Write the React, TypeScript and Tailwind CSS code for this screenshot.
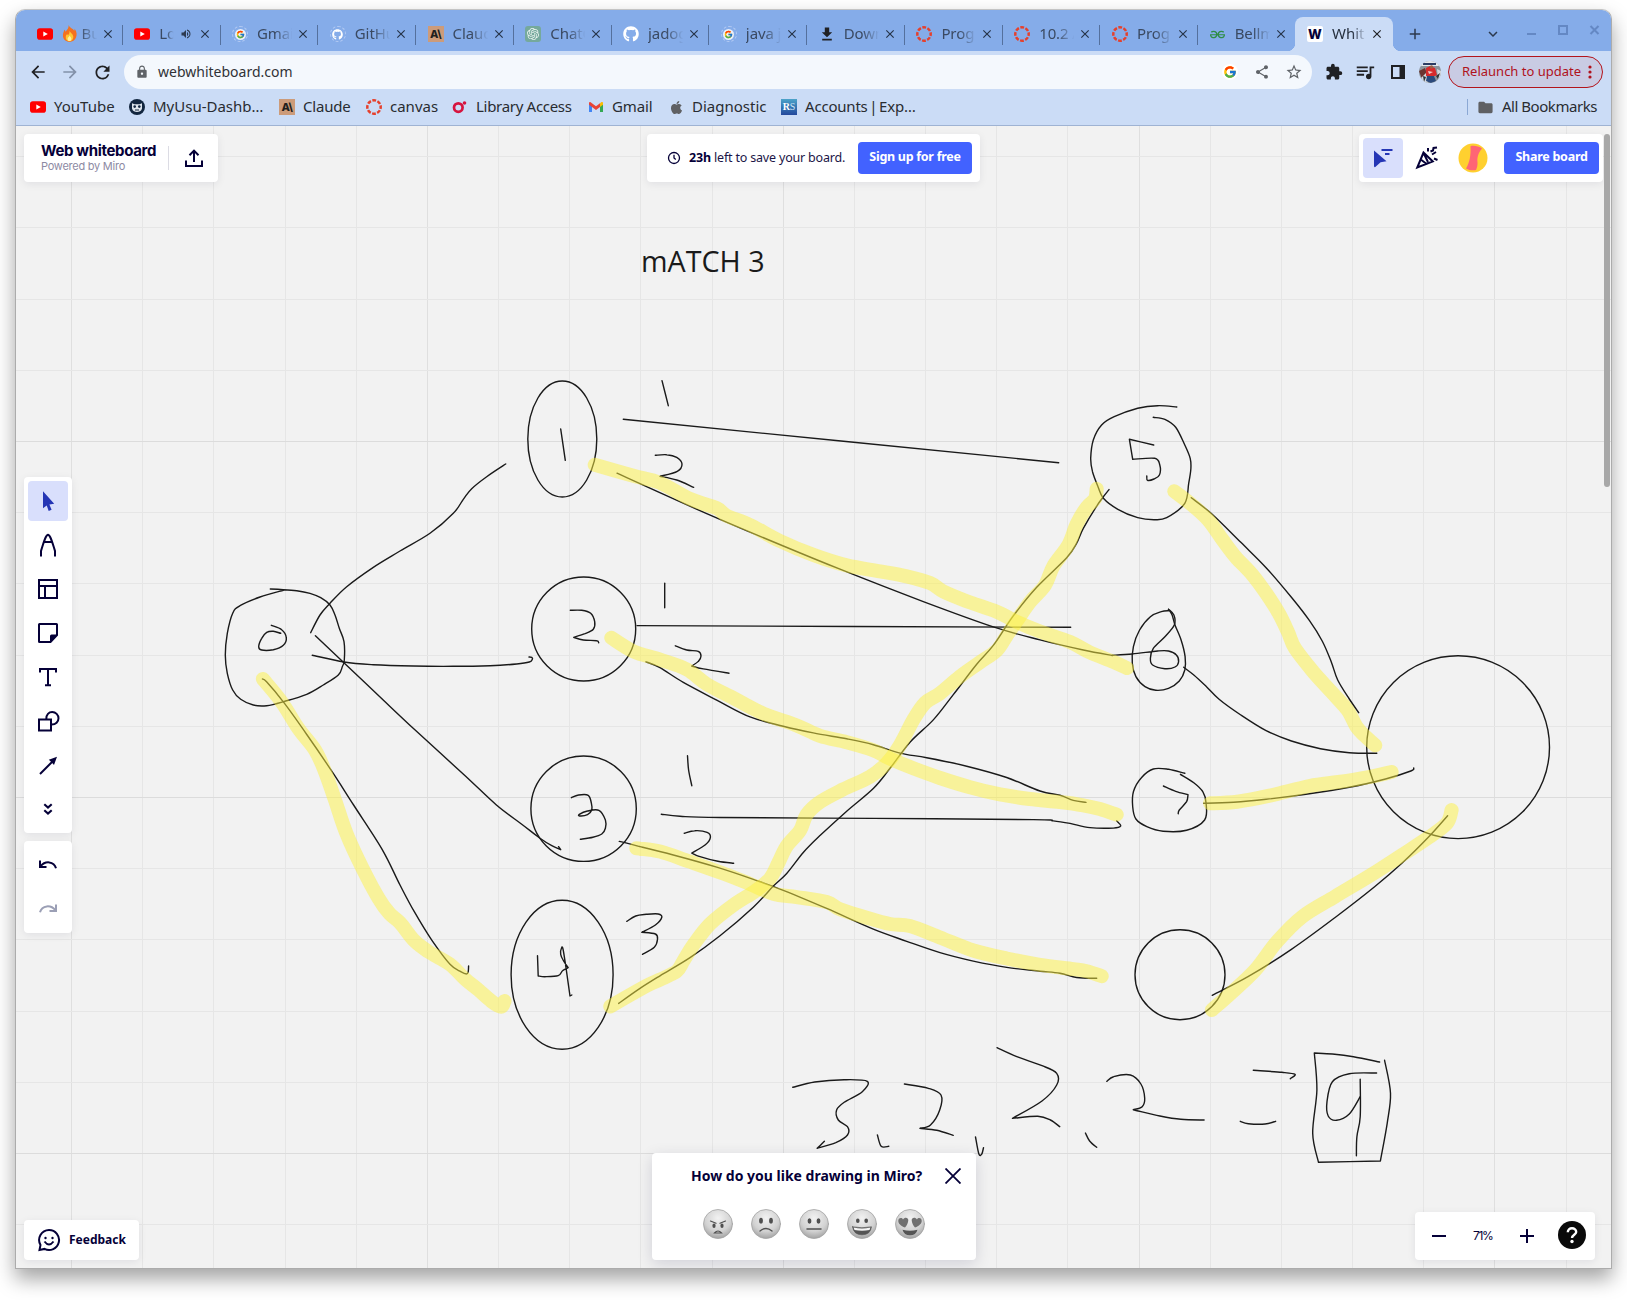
import React from "react";
import { FaGithub, FaApple } from "react-icons/fa";
import { FcGoogle } from "react-icons/fc";
import {
  MdArrowBack, MdArrowForward, MdRefresh, MdLock, MdShare, MdStarBorder, MdExtension,
  MdQueueMusic, MdFolder, MdFileDownload, MdVolumeUp, MdClose, MdAdd, MdKeyboardArrowDown,
} from "react-icons/md";
import { SiGeeksforgeeks, SiOpenai } from "react-icons/si";

/* ---------- brand marks ---------- */

const YouTube = () => (
  <svg viewBox="0 0 16 16" className="size-4">
    <rect y="2.3" width="16" height="11.4" rx="2.8" fill="#f00" />
    <path d="M6.3 5.4v5.2L10.8 8z" fill="#fff" />
  </svg>
);
const Claude = () => (
  <span className="flex size-4 items-center justify-center bg-[#cc9b7a] font-['Inter'] text-[11px] leading-none font-extrabold tracking-[-0.5px] text-[#1f1f1e]">A\</span>
);
const Canvas = () => (
  <svg viewBox="0 0 16 16" className="size-4">
    <circle cx="8" cy="8" r="6.7" fill="none" stroke="#e5402c" strokeWidth="2.500" strokeDasharray="3.800 1.462" strokeDashoffset="1.900" />
  </svg>
);
const Ring = ({ children }: { children: React.ReactNode }) => (
  <span className="flex size-4 items-center justify-center rounded-full border border-dashed border-[#b4cbf3]">{children}</span>
);
const GoogleTab = () => (
  <Ring><span className="flex size-[11px] items-center justify-center rounded-full bg-[#e9effb]"><FcGoogle size={9} /></span></Ring>
);
const GithubTab = () => <Ring><FaGithub size={11} color="#fff" /></Ring>;
const Github = () => <FaGithub size={16} color="#fff" />;
const ChatGpt = () => (
  <span className="flex size-4 items-center justify-center rounded-[3px] bg-[#75a99c]"><SiOpenai size={12} color="#eef6f3" /></span>
);
const Download = () => (
  <svg viewBox="0 0 16 16" className="size-4" fill="#202124">
    <path d="M5.800 1.500h4.400v4.700h3L8 11.200 2.800 6.200h3zM3.200 12.700h9.600v1.800H3.200z" />
  </svg>
);
const Geeks = () => <SiGeeksforgeeks size={15} color="#2f8d46" />;
const White = () => (
  <span className="flex size-4 items-center justify-center rounded-[2px] bg-white font-['Inter'] text-[13px] leading-none font-extrabold text-[#050038]">W</span>
);
const Owl = () => (
  <svg viewBox="0 0 16 16" className="size-4">
    <circle cx="8" cy="8" r="8" fill="#12263f" />
    <path d="M3 4.2 5.5 5.2h5L13 4.2v5.2C12.4 12 10 12.9 8 12.9S3.600 12 3 9.400z" fill="#dfe6ee" />
    <circle cx="5.700" cy="7.600" r="1.300" fill="#12263f" />
    <circle cx="10.300" cy="7.600" r="1.300" fill="#12263f" />
    <path d="M6 11h4" stroke="#12263f" />
  </svg>
);
const Library = () => (
  <svg viewBox="0 0 16 16" className="size-4">
    <circle cx="6.300" cy="8.600" r="4.300" fill="none" stroke="#d6143f" strokeWidth="2.700" />
    <circle cx="12.500" cy="4" r="1.800" fill="#d6143f" />
  </svg>
);
const Gmail = () => (
  <svg viewBox="0 0 16 16" className="size-4">
    <path d="M1 4v9h3V7z" fill="#4285f4" />
    <path d="M15 4v9h-3V7z" fill="#34a853" />
    <path d="M12 4.500V8l3-2.300V4c0-1.300-1.500-1.700-3 .5z" fill="#fbbc04" />
    <path d="M1 4v1.700L8 11l4-3V4.300L8 7.300 3.600 4C2.400 2.500 1 2.800 1 4z" fill="#ea4335" />
  </svg>
);
const Rs = () => (
  <span className="flex size-4 items-center justify-center bg-linear-to-b from-[#4da3c9] to-[#24489c] font-['Liberation_Serif'] text-[10px] leading-none font-bold text-white">R<span className="font-normal text-[#cfe6f5]">S</span></span>
);
const Fire = () => (
  <svg viewBox="0 0 16 18" className="h-[17px] w-[15px] shrink-0">
    <path d="M7 0c1 3 5 4 6 6 .5-.6.500-1.500.400-2.200C16 7 16 10 15 13c-1 3-4 5-7 5s-6.500-2-7-6C.700 9 2 7 2.500 5c.700.500 1 1.200 1.200 2C5.500 5 7.500 3 7 0z" fill="#f4711f" />
    <path d="M8 6c.5 2 3.500 3 4 6 .3 3-1.500 5.300-4 5.300S3.700 15.500 4 12.500c.2-1.500 1-2.500 1.500-3 .2.700.600 1.100 1 1.300C7.500 9.500 8.300 8 8 6z" fill="#fdc834" />
    <path d="M8 11c.5 1 2 2 2 3.500S9.200 17 8 17s-2.200-1-2-2.500S7.500 12.500 8 11z" fill="#fff0a0" />
  </svg>
);

/* ---------- browser chrome ---------- */

type Tab = { icon: () => React.ReactElement; title: string; fire?: boolean; audio?: boolean };
const tabs: Tab[] = [
  { icon: YouTube, title: "Bu", fire: true },
  { icon: YouTube, title: "Lo", audio: true },
  { icon: GoogleTab, title: "Gmai" },
  { icon: GithubTab, title: "GitHu" },
  { icon: Claude, title: "Claud" },
  { icon: ChatGpt, title: "ChatG" },
  { icon: Github, title: "jadog" },
  { icon: GoogleTab, title: "java j" },
  { icon: Download, title: "Down" },
  { icon: Canvas, title: "Prog" },
  { icon: Canvas, title: "10.2 A" },
  { icon: Canvas, title: "Prog" },
  { icon: Geeks, title: "Bellm" },
];

const TabItem = ({ icon: Icon, title, fire, audio, last }: Tab & { last: boolean }) => (
  <div className="relative flex h-full w-[97.770px] shrink-0 items-center pt-[7px] pl-[11.500px] text-[#3a4961]">
    <span className="flex size-4 shrink-0 items-center justify-center"><Icon /></span>
    <span className={`ml-[9px] flex h-[22px] items-center overflow-hidden pb-px text-[15px] tracking-[-0.100px] whitespace-nowrap [mask-image:linear-gradient(to_right,black_50%,transparent_98%)] ${audio ? "w-[15px]" : "w-[36px]"}`}>
      {fire ? <><Fire /><span className="ml-[5px]">{title}</span></> : title}
    </span>
    {audio && <MdVolumeUp size={12} className="ml-[6px]" color="#2d3a50" />}
    <MdClose size={14} color="#263449" className="absolute top-[17px] left-[75.500px]" />
    {!last && <span className="absolute top-[15px] right-0 h-5 w-px bg-[#54709d]" />}
  </div>
);

const TabStrip = () => (
  <div className="flex h-[41px] bg-[#85ace9] pl-[9px]">
    {tabs.map((t, i) => <TabItem key={i} {...t} last={i === tabs.length - 1} />)}
    <div className="relative mt-[7px] -ml-px flex h-[34px] w-[98px] shrink-0 items-center rounded-t-lg bg-[#cbdcf6] pl-3 text-[15px] text-[#26303f]">
      <White />
      <span className="-mt-[2px] ml-[9px] w-[34px] overflow-hidden whitespace-nowrap [mask-image:linear-gradient(to_right,black_60%,transparent)]">Whit</span>
      <MdClose size={14} color="#202124" className="absolute top-[10px] left-[75px]" />
      <span className="absolute bottom-0 -left-2 size-2 bg-[radial-gradient(circle_at_0_0,transparent_8px,#cbdcf6_8.500px)]" />
      <span className="absolute -right-2 bottom-0 size-2 bg-[radial-gradient(circle_at_100%_0,transparent_8px,#cbdcf6_8.500px)]" />
    </div>
    <MdAdd size={18} color="#2c394d" className="mt-[15px] ml-[13px]" />
    <MdKeyboardArrowDown size={18} color="#2c394d" className="mt-[15px] ml-[60px]" />
    <svg viewBox="0 0 80 20" className="mt-[10px] ml-5 h-5 w-20" fill="none" stroke="#6488c4" strokeWidth="2">
      <path d="M5 14h9" />
      <rect x="37" y="6" width="8" height="8" />
      <path d="M68.500 6l8 8M76.500 6l-8 8" />
    </svg>
  </div>
);

const AddressBar = () => (
  <div className="flex h-[42px] items-center bg-[#cbdcf6]">
    <MdArrowBack size={20} color="#202124" className="ml-3" />
    <MdArrowForward size={20} color="#8391a9" className="ml-3" />
    <MdRefresh size={21} color="#202124" className="ml-3" />
    <div className="ml-[11px] flex h-[34px] w-[1188px] items-center rounded-full bg-[#f4f8fd] pl-[11px]">
      <MdLock size={14} color="#5f6368" />
      <span className="-mt-[2px] ml-[9px] text-[14px] text-[#303236]">webwhiteboard.com</span>
      <span className="flex-1" />
      <span className="flex size-4 items-center justify-center rounded-full bg-white"><FcGoogle size={14} /></span>
      <MdShare size={16} color="#5f6368" className="ml-4" />
      <MdStarBorder size={18} color="#5f6368" className="mr-[9px] ml-[15px]" />
    </div>
    <MdExtension size={18} color="#202124" className="ml-[13px]" />
    <MdQueueMusic size={22} color="#202124" className="ml-[11px]" />
    <svg viewBox="0 0 14 14" className="ml-[15px] size-[14px]">
      <path d="M0 0h14v14H0zM2 2v10h6.500V2z" fill="#202124" fillRule="evenodd" />
    </svg>
    <svg viewBox="0 0 22 22" className="ml-[14px] size-[22px] overflow-hidden rounded-full">
      <rect width="22" height="22" fill="#8b949c" />
      <path d="M0 0h22v5H0z" fill="#e4e8ed" />
      <path d="M4 2h13v2H4z" fill="#2b3c64" />
      <path d="M0 10l6-3 2 6-5 5z" fill="#6c3430" />
      <path d="M2 17l5-5 2 10H5zM18 8l4 2v6l-3 2z" fill="#d3d8de" />
      <path d="M7 7l4-2 5 2 2 7-2 1H7z" fill="#d62a2c" />
      <path d="M8 15h7l2 5-5 2-5-2z" fill="#2b4a7c" />
      <circle cx="12.500" cy="6" r="1.700" fill="#9c6048" />
      <path d="M9 10l5 1-4 2z" fill="#f1c9c4" />
      <path d="M4 15l3 1-2 5zM17 15l4-3-2 6z" fill="#303439" />
    </svg>
    <div className="ml-[7px] flex h-8 w-[155px] items-center rounded-full border border-[#b3141b] bg-[#c9cbe3] pl-[13px] text-[13px] whitespace-nowrap text-[#b0121c]">
      <span className="w-[111px]">Relaunch to update</span>
      <svg viewBox="0 0 4 14" className="ml-[15px] h-[14px] w-1" fill="#b0121c">
        <circle cx="2" cy="2" r="1.600" /><circle cx="2" cy="7" r="1.600" /><circle cx="2" cy="12" r="1.600" />
      </svg>
    </div>
  </div>
);

const bookmarks = [
  { icon: <YouTube />, label: "YouTube", w: "w-[99px]" },
  { icon: <Owl />, label: "MyUsu-Dashb…", w: "w-[150px]" },
  { icon: <Claude />, label: "Claude", w: "w-[87px] tracking-[-0.2px]" },
  { icon: <Canvas />, label: "canvas", w: "w-[86px]" },
  { icon: <Library />, label: "Library Access", w: "w-[136px] tracking-[-0.3px]" },
  { icon: <Gmail />, label: "Gmail", w: "w-[80px] tracking-[-0.1px]" },
  { icon: <FaApple size={15} color="#5f6063" />, label: "Diagnostic", w: "w-[113px]" },
  { icon: <Rs />, label: "Accounts | Exp…", w: "w-[150px] [word-spacing:-2px] tracking-[-0.2px]" },
];

const BookmarksBar = () => (
  <div className="flex h-[33px] items-center border-b border-[#9fb3d3] bg-[#cbdcf6] pb-[4px] pl-[14px] text-[15px] text-[#292c31]">
    {bookmarks.map((b) => (
      <div key={b.label} className={`flex shrink-0 items-center gap-2 whitespace-nowrap ${b.w}`}>
        <span className="flex size-4 shrink-0 items-center justify-center">{b.icon}</span>
        <span className="-mt-[2px]">{b.label}</span>
      </div>
    ))}
    <span className="flex-1" />
    <span className="h-4 w-px bg-[#8ba8d4]" />
    <MdFolder size={17} color="#5f6063" className="ml-[9px]" />
    <span className="-mt-[2px] mr-[14px] ml-2 tracking-[-0.450px] whitespace-nowrap">All Bookmarks</span>
  </div>
);

/* ---------- whiteboard drawing ---------- */

type Sheet = { x: number; y: number; sx: number; sy: number };
const A: Sheet = { x: 200, y: 360, sx: 3, sy: 3 };
const B: Sheet = { x: 200, y: 700, sx: 2.8, sy: 3 };
const C: Sheet = { x: 640, y: 360, sx: 3, sy: 2.3758 };
const D: Sheet = { x: 1060, y: 380, sx: 2.7654, sy: 3 };
const E: Sheet = { x: 1060, y: 700, sx: 2.7654, sy: 3 };
const F: Sheet = { x: 760, y: 1030, sx: 2.3758, sy: 3 };

/* Smooth curve through the points; "|" starts a new segment at a sharp corner. */
function curve(s: Sheet, data: string): string {
  let out = "";
  let corner: number[] | null = null;
  for (const part of data.split("|")) {
    const p = part.trim().split(/\s+/).map((q) => {
      const [x, y] = q.split(",").map(Number);
      return [s.x + x / s.sx, s.y + y / s.sy];
    });
    if (corner) p.unshift(corner);
    else out += `M${p[0][0].toFixed(1)} ${p[0][1].toFixed(1)}`;
    for (let i = 0; i < p.length - 1; i++) {
      const a = p[Math.max(i - 1, 0)], b = p[i], c = p[i + 1], d = p[Math.min(i + 2, p.length - 1)];
      const n = [b[0] + (c[0] - a[0]) / 6, b[1] + (c[1] - a[1]) / 6, c[0] - (d[0] - b[0]) / 6, c[1] - (d[1] - b[1]) / 6, c[0], c[1]];
      out += "C" + n.map((v) => v.toFixed(1)).join(" ");
    }
    corner = p[p.length - 1];
  }
  return out;
}

const pen: [Sheet, string][] = [
  [A, "211,687 250,689 290,692 330,700 362,713 390,735 405,765 418,805 432,845 433,900 427,920 415,945 370,975 320,1003 250,1025 200,1037 160,1035 122,1018 98,990 82,940 76,885 82,820 98,760 120,737 180,711 250,691"],
  [A, "214,796 245,809 259,833 250,856 220,869 185,870 176,860 185,835 200,817 220,814 242,820"],
  [A, "332,818 360,765 390,730 440,680 520,622 600,573 690,520 760,460 790,418 815,386 860,350 917,312"],
  [A, "337,886 432,906 520,914 640,918 760,919 870,917 950,912 988,906 997,898 995,892 987,891"],
  [B, "323,-193 403,-112 513,0 600,88 740,225 830,315 900,372 950,413 985,437 1010,449 | 1004,440"],
  [B, "175,-63 187,-54 235,8 300,105 370,215 430,315 510,448 560,555 600,635 650,722 700,793 730,815 746,822 751,815 752,798"],
  [A, "1082,207 1096,301"],
  [A, "1386,62 1405,137"],
  [A, "1366,286 1400,284 1430,292 1446,312 1432,334 1380,349 | 1430,360 1481,382"],
  [A, "1111,751 1145,751 1172,760 1184,785 1180,808 1155,821 1121,832 | 1150,840 1190,842 1196,848"],
  [A, "1394,670 1394,743"],
  [B, "1040,293 1060,285 1087,286 1096,310 1097,330 1085,344 1063,348 1062,343 1085,333 1117,331 1135,360 1135,385 1125,402 1100,412 1065,418"],
  [B, "945,767 947,828 | 965,830 1003,827 1015,812 1031,803 | 1018,783 1010,763 1013,742 1017,750 1025,805 1036,888 | 1041,885"],
  [B, "1195,664 1220,648 1250,643 1283,642 1293,652 1275,675 1237,697 | 1275,702 1281,718 1272,742 1239,763"],
  [B, "1365,167 1368,210 1377,257"],
  [B, "1356,400 1385,392 1420,397 1429,412 1415,434 1377,459 | 1400,470 1450,484 1494,490"],
  [C, "-50,141 1256,244"],
  [C, "-69,269 0,294 200,365 430,442 600,497 850,574 1060,634 1200,665 1330,689 1417,702"],
  [C, "-9,631 1292,635"],
  [C, "106,679 140,689 175,692 183,703 175,716 155,727 | 190,734 267,744"],
  [C, "18,717 60,731 130,766 230,808 330,848 430,870 520,886 620,900 700,914 780,934 860,945 980,965 1100,992 1200,1024 1260,1034 1300,1046 1338,1051"],
  [C, "64,1079 120,1084 240,1087 700,1089 1180,1092 1240,1095 1290,1101 1350,1111 1420,1112 1442,1107 1430,1095"],
  [C, "-62,1143.6 0,1156 100,1176 230,1205 340,1234 430,1260 560,1303 700,1352 800,1381 900,1408 1000,1428 1100,1443 1200,1452 1260,1457 1310,1467 1370,1469"],
  [C, "-64,1528.5 0,1493 60,1463 150,1420 240,1368 340,1300 400,1250 440,1220 490,1170 540,1130 620,1072 700,1018 750,970 810,908 880,855 940,795 1010,723 1060,678 1120,608 1190,540 1280,470 1310,435 1330,400 1370,347 1390,325 1407,308"],
  [D, "323,81 270,77 215,85 150,110 115,135 92,180 85,235 90,275 105,320 120,355 160,388 215,413 260,419 295,413 345,370 356,310 362,265 360,235 345,195 320,142 290,118 258,112"],
  [D, "259,195 192,178 | 201,238 | 262,235 276,255 275,285 260,297 242,301 240,288"],
  [D, "363,353 420,402 500,487 570,563 640,652 690,722 725,783 750,845 768,900 800,957 826,998"],
  [D, "300,688 315,705 316,735 290,770 258,805 250,835 256,855 290,866 318,861 328,845 322,825 300,813 270,813 200,822 145,826"],
  [D, "300,688 310,705 318,735 335,780 346,830 345,870 330,903 300,925 265,931 235,920 210,890 200,850 203,800 220,750 250,710 280,695 300,692"],
  [D, "342,862 370,885 405,920 440,958 500,1005 570,1052 640,1083 720,1106 800,1118 876,1120"],
  [E, "345,220 300,208 258,207 225,233 203,275 201,320 210,357 240,380 285,394 350,391 400,360 404,310 395,275 370,248 333,223"],
  [E, "286,258 320,274 354,284 | 350,305 330,330 327,341"],
  [E, "397,310 480,307 570,298 680,283 800,262 900,237 970,213 978,204"],
  [E, "421,886 520,830 640,748 760,653 870,560 950,485 1020,410 1072,347"],
  [F, "78,172 130,156 200,149 255,154 243,185 200,217 182,240 186,270 208,290 208,315 180,338 136,355 | 153,334"],
  [F, "279,315 288,349 306,349"],
  [F, "343,162 400,175 430,195 427,240 405,285 380,295 | 420,301 459,316"],
  [F, "512,321 520,372 527,372 531,353"],
  [F, "563,53 610,80 670,107 705,130 705,165 670,213 600,265 | 660,259 690,270 712,290"],
  [F, "773,309 783,333 800,352"],
  [F, "824,154 840,140 880,135 905,162 914,205 908,230 887,239 | 950,258 1000,268 1055,270"],
  [F, "1172,121 1240,127 1271,133 1260,146"],
  [F, "1141,274 1160,281 1200,282 1225,274"],
  [F, "1472,96 1410,80 1360,72 1317,69 | 1323,180 1313,310 1327,397 | 1474,393 | 1490,280 1498,190 1484,91"],
  [F, "1465,129 1400,131 1360,155 1347,215 1350,258 1370,271 1400,252 1426,200"],
  [F, "1426,148 1426,260 1418,320 1417,377"],
];

const highlighter: [Sheet, string][] = [
  [B, "176,-63 228,5 275,85 322,150 350,215 378,300 410,400 455,505 500,595 530,640 560,668 600,722 640,755 700,793 740,835 780,870 815,903 843,920 853,903"],
  [C, "-136,249 -20,275 60,292 150,330 230,352 260,370 330,392 420,430 520,463 620,488 720,502 800,514 870,530 910,550 980,573 1070,598 1130,622 1200,645 1290,670 1350,695 1420,717 1461,732"],
  [C, "-86,660 -20,692 60,712 140,735 200,770 280,803 370,840 470,868 540,893 620,908 700,927 750,947 820,970 900,993 990,1015 1080,1032 1170,1043 1260,1050 1330,1058 1380,1067 1430,1080"],
  [C, "-11,1160 0,1161 60,1168 150,1192 250,1220 330,1245 400,1268 470,1276 560,1288 600,1305 680,1325 750,1340 810,1345 900,1372 1000,1403 1100,1422 1200,1437 1300,1447 1340,1452 1385,1464"],
  [C, "-89,1535.6 19,1487 60,1472 110,1452 130,1428 160,1390 210,1340 280,1295 345,1262 390,1232 415,1195 440,1155 480,1118 500,1080 540,1050 610,1020 690,990 740,958 780,915 820,855 855,815 900,792 960,752 1020,718 1070,690 1100,655 1130,620 1170,575 1215,535 1240,490 1285,440 1310,390 1340,350 1365,330 1370,306"],
  [D, "316,334 365,375 410,420 450,480 485,530 530,582 570,640 605,700 630,755 650,805 700,875 750,935 795,990 820,1040 850,1075 872,1096"],
  [E, "415,310 490,305 580,287 690,258 770,246 850,232 917,216"],
  [E, "420,930 470,882 540,810 600,725 670,650 760,590 860,525 950,462 1020,412 1070,370 1083,330"],
];

const gridX = Array.from({ length: 22 }, (_, i) => i);
const gridY = Array.from({ length: 16 }, (_, i) => i);

const Board = () => (
  <svg viewBox="16 126 1595 1142" className="absolute inset-0 h-full w-full" fill="none">
    {gridX.map((i) => (
      <rect key={i} x={Math.round(71 + i * 71.170)} y="126" width="1" height="1142" fill={i % 5 === 0 ? "#dfdfdf" : "#e6e6e6"} />
    ))}
    {gridY.map((i) => (
      <rect key={i} x="16" y={Math.round(156.200 + i * 71.200)} width="1595" height="1" fill={i % 5 === 4 ? "#dcdcdc" : "#e6e6e6"} />
    ))}
    <g stroke="#1a1a1a" strokeWidth="1.400" strokeLinecap="round" strokeLinejoin="round">
      {pen.map(([s, d], i) => <path key={i} d={curve(s, d)} />)}
      <ellipse cx="562.300" cy="439" rx="34.500" ry="58" />
      <circle cx="583.700" cy="629" r="52" />
      <circle cx="583.600" cy="808.700" r="52.700" />
      <ellipse cx="562.100" cy="974.700" rx="51" ry="74.500" />
      <circle cx="1458.100" cy="747.200" r="91.400" />
      <circle cx="1180" cy="974.700" r="45" />
    </g>
    <g stroke="rgb(254 242 66 / .5)" strokeWidth="14" strokeLinecap="round" strokeLinejoin="round">
      {highlighter.map(([s, d], i) => <path key={i} d={curve(s, d)} />)}
    </g>
  </svg>
);

/* ---------- floating panels ---------- */

const panel = "absolute rounded-[4px] bg-white shadow-[0_2px_8px_rgba(5,0,56,0.08)]";

const TitlePanel = () => (
  <div className={`${panel} top-2 left-2 flex h-12 w-[194px] items-center pl-[17px]`}>
    <div className="w-[127px] font-['Inter'] whitespace-nowrap">
      <div className="text-[15px] leading-[17px] font-bold tracking-[-0.350px] text-[#050038]">Web whiteboard</div>
      <div className="text-[11px] leading-[15px] tracking-[-0.250px] text-[#8d8aa3]">Powered by Miro</div>
    </div>
    <span className="h-6 w-px bg-[#dcdce4]" />
    <svg viewBox="0 0 18 18" className="ml-4 size-[18px]" fill="none" stroke="#050038" strokeWidth="2">
      <path d="M1 11.500V17h16v-5.500M9 13V2M4.500 6.200 9 1.600l4.500 4.600" />
    </svg>
  </div>
);

const SavePanel = () => (
  <div className={`${panel} top-2 left-[631px] flex h-12 w-[333px] items-center pl-5 whitespace-nowrap`}>
    <svg viewBox="0 0 14 14" className="size-[14px]" fill="none" stroke="#050038" strokeWidth="1.300">
      <circle cx="7" cy="7" r="5.500" /><path d="M7 3.800V7l1.800 1.600" />
    </svg>
    <span className="ml-2 w-[156px] text-[12.500px] tracking-[-0.180px] text-[#1b1547]"><b className="text-[#050038]">23h</b> left to save your board.</span>
    <span className="ml-[13px] flex h-8 w-[114px] items-center justify-center rounded-[4px] bg-[#4262ff] pb-px text-[12.500px] font-bold tracking-[-0.280px] text-white">Sign up for free</span>
  </div>
);

const SharePanel = () => (
  <div className={`${panel} top-2 left-[1343px] flex h-12 w-[244px] items-center pl-1`}>
    <span className="flex h-10 w-10 items-center justify-center rounded-[4px] bg-[#d9dffc]">
      <svg viewBox="0 0 20 20" className="size-5">
        <path d="M1 2.600 13.500 13.300 7.600 14.300 2.300 19Q1 19.600 1 18z" fill="#2536b5" />
        <path d="M8.500 2h11M12 6h4.500" stroke="#2536b5" strokeWidth="1.800" />
      </svg>
    </span>
    <svg viewBox="0 0 24 24" className="ml-3 size-6" fill="none" stroke="#050038" strokeWidth="2">
      <path d="M2.300 21.500 8.500 6.500 17.800 15.500zM5.800 13.500l5.500 4.200M8.500 7l4.500 9M17 8.500l4-2.500M13 2v3.500M19 12.500l3.500 1.500M15.500 5.500l2.500-1 .5-2.500 3.500-.5" />
    </svg>
    <svg viewBox="0 0 30 30" className="ml-[19px] size-[30px]">
      <circle cx="15" cy="15" r="14.500" fill="#ffd02f" />
      <path d="M12.500 3.200C15 2.300 21 3 24 5.500c-4 5-5 9-4.500 14 .2 3-.5 5-1.500 7.500-3 .8-7 .3-10-1.500 3.500-6 5-13 4.500-22.300z" fill="#ff6575" />
    </svg>
    <span className="ml-4 flex h-8 w-[95px] items-center justify-center rounded-[4px] bg-[#4262ff] pb-px text-[12.500px] font-bold tracking-[-0.250px] whitespace-nowrap text-white">Share board</span>
  </div>
);

const Tool = ({ children, active = false, dim = false }: { children: React.ReactNode; active?: boolean; dim?: boolean }) => (
  <span className={`flex size-10 items-center justify-center rounded-[4px] ${active ? "bg-[#d9dffc]" : ""} ${dim ? "text-[#9b9fb5]" : "text-[#050038]"}`}>
    <svg viewBox="0 0 24 24" className="size-6" fill="none" stroke="currentColor" strokeWidth="2">{children}</svg>
  </span>
);

const ToolPanels = () => (
  <>
    <div className={`${panel} top-[351px] left-2 flex h-[356px] w-12 flex-col items-center gap-1 pt-1`}>
      <Tool active><path d="M7 2.300v17l3.700-2.800 2 5.400 2.900-1.100-2.200-5.200 4.800-.8z" fill="#2536b5" stroke="none" /></Tool>
      <Tool><path d="M5 23.500V18C8 8 9.700 2.300 12 1.800c2.300.5 4 6.200 7 16.200v5.500M8.700 9h6.600" /></Tool>
      <Tool><path d="M3 3h18v18H3zM3 9h18M9 9v12" /></Tool>
      <Tool>
        <path d="M3.500 3h17q.5 0 .5.500V14l-6.500 7H3.500q-.5 0-.5-.5v-17q0-.5.500-.5z" />
        <path d="M21 13.500h-5.500q-1.500 0-1.500 1.500v6z" fill="currentColor" stroke="none" />
      </Tool>
      <Tool><path d="M4 7.500V4h16v3.500M12 4v16M9 20.200h6" /></Tool>
      <Tool><path d="M3 10.500h12v11H3zM10.300 10C10 5.500 13 3 16.200 3c3.500 0 6.300 2.800 6.300 6.300 0 3.400-2.800 6.200-6.700 6.200" /></Tool>
      <Tool><path d="M4 21 17.500 7.500" /><path d="M21 3.700 18 12l-2.500-2.700-2.700-2.600z" fill="currentColor" stroke="none" /></Tool>
      <Tool><path d="M8.300 7.300 12 10.600l3.700-3.300M8.300 13.300 12 16.600l3.700-3.300" strokeWidth="2.100" /></Tool>
    </div>
    <div className={`${panel} top-[715px] left-2 flex h-[92px] w-12 flex-col items-center gap-1 pt-1`}>
      <Tool><path d="M4 7.500V14h6.500M4.600 13.400C9 7.500 18 8 20 15.300" /></Tool>
      <Tool dim><path d="M20 7.500V14h-6.500M19.400 13.400C15 7.500 6 8 4 15.300" /></Tool>
    </div>
  </>
);

const Face = ({ children }: { children: React.ReactNode }) => (
  <svg viewBox="0 0 30 30" className="size-[30px]" fill="none" stroke="#4f4f4f" strokeLinecap="round">
    <circle cx="15" cy="15" r="14.500" fill="url(#face)" stroke="#a3a3a3" strokeWidth=".8" />
    {children}
  </svg>
);

const SurveyPanel = () => (
  <div className="absolute top-[1027px] left-[636px] h-[107px] w-[324px] rounded-[4px] bg-white pt-[15px] shadow-[0_4px_16px_rgba(5,0,56,0.14)]">
    <div className="flex items-center pl-[39px] text-[14px] leading-4 font-bold text-[#050038]">
      <span className="w-[254px] whitespace-nowrap">How do you like drawing in Miro?</span>
      <svg viewBox="0 0 16 16" className="size-4" fill="none" stroke="#050038" strokeWidth="1.800"><path d="M.500.500l15 15M15.500.500l-15 15" /></svg>
    </div>
    <svg className="absolute size-0">
      <defs>
        <radialGradient id="face" cx=".5" cy=".3" r=".75">
          <stop offset="0" stopColor="#f2f2f2" /><stop offset=".6" stopColor="#d2d2d2" /><stop offset="1" stopColor="#9a9a9a" />
        </radialGradient>
      </defs>
    </svg>
    <div className="mt-[25px] flex gap-[18px] pl-[51px]">
      <Face>
        <path d="M7.500 12 13 14.300M22.500 12 17 14.300M11.500 24q3.500-4 7 0z" strokeWidth="1.200" />
        <g fill="#4f4f4f" stroke="none"><ellipse cx="11" cy="16.700" rx="1.600" ry="2.300" /><ellipse cx="19" cy="16.700" rx="1.600" ry="2.300" /></g>
      </Face>
      <Face>
        <path d="M9 22q6-5 12 0" strokeWidth="1.300" />
        <g fill="#4f4f4f" stroke="none"><ellipse cx="10" cy="11.700" rx="1.900" ry="2.900" /><ellipse cx="20" cy="11.700" rx="1.900" ry="2.900" /></g>
      </Face>
      <Face>
        <path d="M8 20h14" strokeWidth="1.500" />
        <g fill="#4f4f4f" stroke="none"><ellipse cx="10.500" cy="12" rx="1.900" ry="2.700" /><ellipse cx="19.500" cy="12" rx="1.900" ry="2.700" /></g>
      </Face>
      <Face>
        <path d="M5.500 17.800q9.500 2 19 0-1 8-9.500 8t-9.500-8z" fill="#555" strokeWidth=".6" />
        <path d="M6.500 18.500q8.500 2 17 0l-1 2.500q-7.500 1.500-15 0z" fill="#f4f4f4" stroke="none" />
        <g fill="#4f4f4f" stroke="none"><ellipse cx="10.800" cy="11.800" rx="1.800" ry="2.300" /><ellipse cx="19.200" cy="11.800" rx="1.800" ry="2.300" /></g>
      </Face>
      <Face>
        <path d="M7.500 20.800q7.500 2 15 0-1.500 5.500-7.500 5.500t-7.500-5.500z" fill="#555" stroke="none" />
        <g fill="#707070" stroke="none">
          <path d="M10 18.500C6 17 3 14.500 3.300 11.500c.5-3 3.700-3 4.700-1C9.500 8 13.500 8.300 13.300 11.500c-.2 2.500-1.500 5-3.300 7z" />
          <path d="M20 18.500c4-1.500 7-4 6.700-7-.5-3-3.700-3-4.700-1-1.500-2.500-5.500-2.200-5.300 1 .2 2.500 1.500 5 3.300 7z" />
        </g>
      </Face>
    </div>
  </div>
);

const ZoomPanel = () => (
  <div className={`${panel} top-[1086px] left-[1399px] flex h-12 w-[180px] items-center pl-[17px] text-[#050038]`}>
    <svg viewBox="0 0 14 14" className="size-[14px]" stroke="#050038" strokeWidth="2"><path d="M0 7h14" /></svg>
    <span className="ml-[27px] w-5 font-['Inter'] text-[12px] tracking-[-1.300px]">71%</span>
    <svg viewBox="0 0 14 14" className="ml-[27px] size-[14px]" stroke="#050038" strokeWidth="2"><path d="M0 7h14M7 0v14" /></svg>
    <svg viewBox="0 0 28 28" className="-mt-[2px] ml-6 size-7" fill="none" stroke="#fff" strokeWidth="2.400">
      <circle cx="14" cy="14" r="14" fill="#0a0a0a" stroke="none" />
      <path d="M9.800 11.300c0-2.400 1.800-4 4.200-4s4.200 1.500 4.200 3.700c0 2.700-4.200 2.800-4.200 6" />
      <circle cx="14" cy="20.500" r="1.700" fill="#fff" stroke="none" />
    </svg>
  </div>
);

const FeedbackPanel = () => (
  <div className={`${panel} top-[1094px] left-2 flex h-10 w-[115px] items-center pl-[13px] text-[12px] font-bold text-[#050038]`}>
    <svg viewBox="0 0 24 24" className="size-6" fill="none" stroke="#050038" strokeWidth="2">
      <path d="M12 2a10 10 0 1 1-4.500 18.900L2.500 22l1-5A10 10 0 0 1 12 2zM7.500 13.500q4.500 6 9 0" />
      <circle cx="8.500" cy="10" r="1.200" fill="#050038" stroke="none" /><circle cx="15.500" cy="10" r="1.200" fill="#050038" stroke="none" />
    </svg>
    <span className="ml-2">Feedback</span>
  </div>
);

export default function App() {
  return (
    <div className="h-[1300px] w-[1627px] overflow-hidden bg-white pt-[9px] pl-[15px] font-['Noto_Sans',sans-serif]">
      <div className="flex h-[1260px] w-[1597px] flex-col rounded-t-[10px] border border-[#acacac] border-t-[#c4c4c4] bg-[#f2f2f2] shadow-[0_10px_20px_rgba(0,0,0,0.36)]">
        <div className="overflow-hidden rounded-t-[9px]">
          <TabStrip />
          <AddressBar />
          <BookmarksBar />
        </div>
        <main className="relative flex-1 overflow-hidden">
          <Board />
          <div className="absolute top-[115px] left-[625px] font-['Open_Sans'] text-[28.700px] leading-10 whitespace-nowrap text-[#1a1a1a]">mATCH 3</div>
          <TitlePanel />
          <SavePanel />
          <SharePanel />
          <ToolPanels />
          <FeedbackPanel />
          <SurveyPanel />
          <ZoomPanel />
          <span className="absolute top-2 right-px h-[353px] w-[6px] rounded-full bg-[#a8a8a8]" />
        </main>
      </div>
    </div>
  );
}
